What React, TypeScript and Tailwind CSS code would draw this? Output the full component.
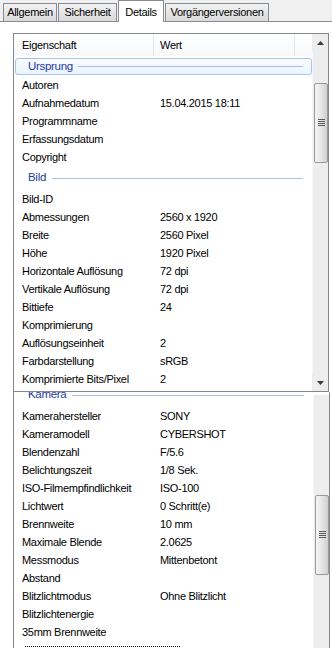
import React from 'react';

type Row = { label: string; value?: string };

const ursprung: Row[] = [
  { label: 'Autoren' },
  { label: 'Aufnahmedatum', value: '15.04.2015 18:11' },
  { label: 'Programmname' },
  { label: 'Erfassungsdatum' },
  { label: 'Copyright' },
];

const bild: Row[] = [
  { label: 'Bild-ID' },
  { label: 'Abmessungen', value: '2560 x 1920' },
  { label: 'Breite', value: '2560 Pixel' },
  { label: 'Höhe', value: '1920 Pixel' },
  { label: 'Horizontale Auflösung', value: '72 dpi' },
  { label: 'Vertikale Auflösung', value: '72 dpi' },
  { label: 'Bittiefe', value: '24' },
  { label: 'Komprimierung' },
  { label: 'Auflösungseinheit', value: '2' },
  { label: 'Farbdarstellung', value: 'sRGB' },
  { label: 'Komprimierte Bits/Pixel', value: '2' },
];

const kamera: Row[] = [
  { label: 'Kamerahersteller', value: 'SONY' },
  { label: 'Kameramodell', value: 'CYBERSHOT' },
  { label: 'Blendenzahl', value: 'F/5.6' },
  { label: 'Belichtungszeit', value: '1/8 Sek.' },
  { label: 'ISO-Filmempfindlichkeit', value: 'ISO-100' },
  { label: 'Lichtwert', value: '0 Schritt(e)' },
  { label: 'Brennweite', value: '10 mm' },
  { label: 'Maximale Blende', value: '2.0625' },
  { label: 'Messmodus', value: 'Mittenbetont' },
  { label: 'Abstand' },
  { label: 'Blitzlichtmodus', value: 'Ohne Blitzlicht' },
  { label: 'Blitzlichtenergie' },
  { label: '35mm Brennweite' },
];

const PropRow: React.FC<{ row: Row }> = ({ row }) => (
  <div className="flex h-[18px] items-center whitespace-nowrap">
    <div className="w-[146px] shrink-0 pl-[8px]">{row.label}</div>
    <div>{row.value}</div>
  </div>
);

const Group: React.FC<{ title: string; line: string }> = ({ title, line }) => (
  <div className="flex h-[24px] items-center pl-[14px] pr-[9px]">
    <span className="text-[11.5px] text-[#1e3c9c]">{title}</span>
    <div className={`h-px flex-1 bg-[#a9bfe8] ${line}`}></div>
  </div>
);

const Arrow: React.FC<{ up?: boolean }> = ({ up }) => (
  <svg width="7" height="4" viewBox="0 0 7 4">
    <path d={up ? 'M0 4 L3.5 0 L7 4 Z' : 'M0 0 L3.5 4 L7 0 Z'} fill="#3a3a3a" />
  </svg>
);

const Thumb: React.FC<{ className: string }> = ({ className }) => (
  <div
    className={`mx-px flex h-[80px] w-[14px] items-center justify-center rounded-[2px] border border-[#9a9a9a] bg-gradient-to-r from-[#f4f4f4] via-[#e6e6e6] to-[#cfcfcf] ${className}`}
  >
    <svg width="7" height="8" viewBox="0 0 7 8">
      {[0, 2, 4, 6].map((y) => (
        <rect key={y} x="0" y={y} width="7" height="1" fill="#5a5a5a" />
      ))}
    </svg>
  </div>
);

const Tab: React.FC<{ label: string; w: string; active?: boolean }> = ({ label, w, active }) =>
  active ? (
    <div className={`${w} -mb-px flex h-[22px] shrink-0 justify-center border border-b-0 border-[#898c95] bg-white pt-[3px]`}>
      {label}
    </div>
  ) : (
    <div className={`${w} flex h-[18px] shrink-0 items-center justify-center border border-b-0 border-[#898c95] bg-gradient-to-b from-[#f3f3f3] to-[#d9d9d9]`}>
      {label}
    </div>
  );

export default function App() {
  return (
    <div className="h-[648px] w-[332px] overflow-hidden bg-white font-['Liberation_Sans',Arial,sans-serif] text-[11px] tracking-[-0.3px] text-black">
      {/* tabs */}
      <div className="flex h-[22px] items-end gap-px border-b border-[#898c95] bg-[#f0f0f0] pl-[3px]">
        <Tab label="Allgemein" w="w-[54px]" />
        <Tab label="Sicherheit" w="w-[59px]" />
        <Tab label="Details" w="w-[46px]" active />
        <Tab label="Vorgängerversionen" w="w-[104px]" />
      </div>

      <div className="pl-[13px] pt-[11px]">
        {/* upper view */}
        <div className="flex h-[359px] w-[316px] border border-[#828790]">
          <div className="flex-1 overflow-hidden">
            <div className="flex h-[22px] items-center bg-gradient-to-b from-white to-[#f7f8fa]">
              <div className="h-full w-[140px] shrink-0 border-r border-[#e3e5e9] pl-[8px] leading-[22px]">Eigenschaft</div>
              <div className="h-full w-[141px] shrink-0 border-r border-[#e3e5e9] pl-[6px] leading-[22px]">Wert</div>
            </div>
            <div className="h-[20px] pt-[2px]">
              <div className="ml-px flex h-[17px] items-center rounded-[3px] border border-[#a6c6ee] bg-gradient-to-b from-[#fafcff] to-[#eaf3fe] pl-[12px] pr-[8px]">
                <span className="text-[11.5px] text-[#1e3c9c]">Ursprung</span>
                <div className="ml-[5px] h-px flex-1 bg-[#a9bfe8]"></div>
              </div>
            </div>
            {ursprung.map((r) => (
              <PropRow key={r.label} row={r} />
            ))}
            <Group title="Bild" line="ml-[6px]" />
            {bild.map((r) => (
              <PropRow key={r.label} row={r} />
            ))}
          </div>
          <div className="flex w-[16px] shrink-0 flex-col bg-[#ededed]">
            <div className="flex h-[17px] items-center justify-center">
              <Arrow up />
            </div>
            <div className="flex-1 border-l border-[#f7f7f7]">
              <Thumb className="mt-[32px]" />
            </div>
            <div className="flex h-[17px] items-center justify-center">
              <Arrow />
            </div>
          </div>
        </div>

        {/* lower view */}
        <div className="flex h-[256px] w-[317px] border-x border-[#828790]">
          <div className="flex-1 overflow-hidden">
            <div className="-mt-[9px]">
              <Group title="Kamera" line="ml-[6px]" />
              {kamera.map((r) => (
                <PropRow key={r.label} row={r} />
              ))}
              <div className="ml-[11px] mt-[5px] h-px w-[156px] bg-[repeating-linear-gradient(90deg,#000_0_1px,transparent_1px_2px)]"></div>
            </div>
          </div>
          <div className="mt-[3px] w-[16px] shrink-0 border-l border-[#f7f7f7] bg-[#ededed]">
            <Thumb className="mt-[100px]" />
          </div>
        </div>
      </div>
    </div>
  );
}
